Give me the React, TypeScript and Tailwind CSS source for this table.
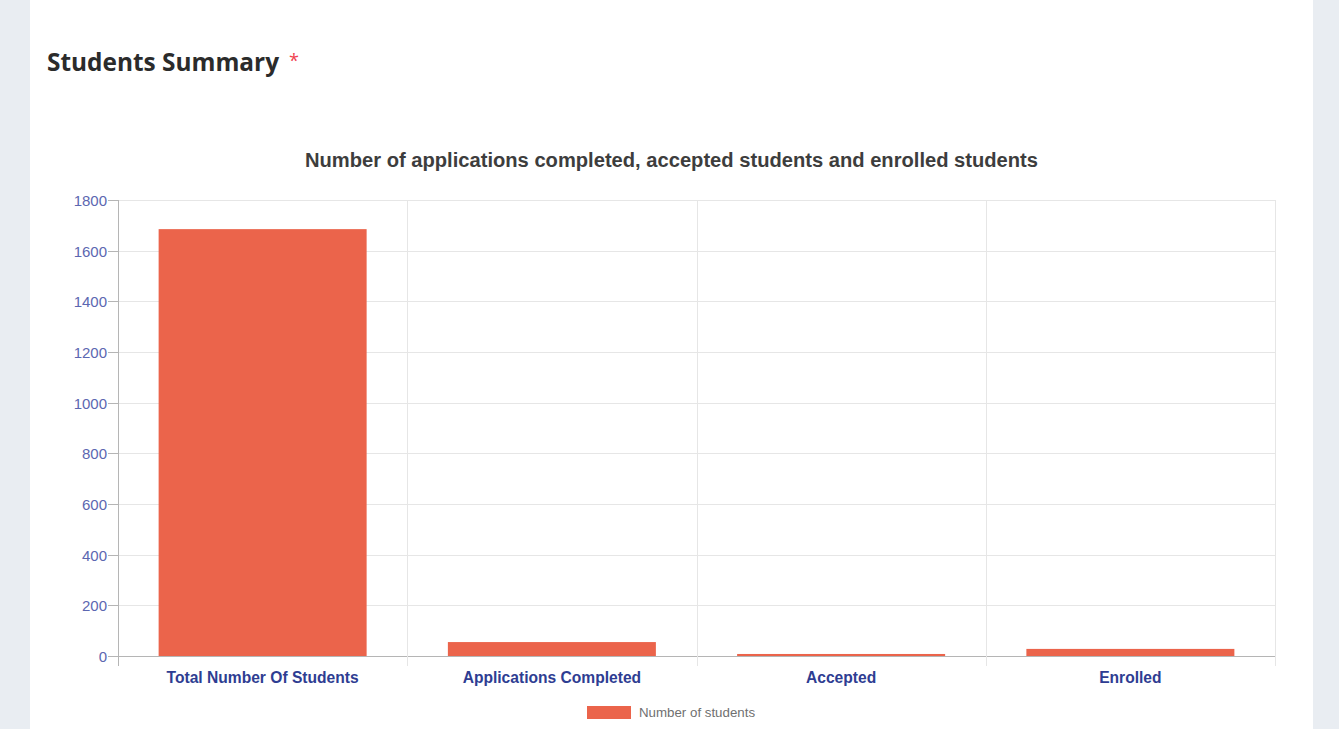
import React from "react";

const TOP = 130;
const LEFT = 30;
const x0 = 118;
const x1 = 1275;
const yTop = 200;
const yBottom = 656;
const maxV = 1800;
const cats = [
  { label: "Total Number Of Students", v: 1685 },
  { label: "Applications Completed", v: 55 },
  { label: "Accepted", v: 8 },
  { label: "Enrolled", v: 28 },
];

function Chart() {
  const cw = (x1 - x0) / cats.length;
  const ticks = [0, 200, 400, 600, 800, 1000, 1200, 1400, 1600, 1800];
  const yOf = (v: number) => yBottom - (v / maxV) * (yBottom - yTop);
  return (
    <svg width={1283} height={600} className="block" style={{ fontFamily: '"Liberation Sans", Arial, sans-serif' }}>
      <g transform={`translate(${-LEFT}, ${-TOP})`}>
        <text x={671.5} y={167} textAnchor="middle" fontSize={20.15} fontWeight={700} fill="#3d3d3d">
          Number of applications completed, accepted students and enrolled students
        </text>
        {ticks.map((t) => {
          const y = Math.round(yOf(t)) + 0.5;
          return (
            <g key={t}>
              <line x1={109} x2={x1} y1={y} y2={y} stroke={t === 0 ? "#b5b5b5" : "#e6e6e6"} strokeWidth={1} />
              <line x1={108} x2={118} y1={y} y2={y} stroke="#b5b5b5" strokeWidth={1} />
              <text x={107} y={y + 5} textAnchor="end" fontSize={15} fill="#5c67b1">
                {t}
              </text>
            </g>
          );
        })}
        {[0, 1, 2, 3, 4].map((i) => {
          const x = Math.round(x0 + i * cw) + 0.5;
          return (
            <line key={i} x1={x} x2={x} y1={yTop} y2={666} stroke={i === 0 ? "#b5b5b5" : "#e6e6e6"} strokeWidth={1} />
          );
        })}
        {cats.map((c, i) => {
          const cx = x0 + i * cw + cw / 2;
          const bw = 208;
          const y = yOf(c.v);
          return (
            <g key={c.label}>
              <rect x={cx - bw / 2} y={y} width={bw} height={yBottom - y} fill="#eb644b" />
              <text x={cx} y={682.5} textAnchor="middle" fontSize={15.6} fontWeight={700} fill="#2e3d92">
                {c.label}
              </text>
            </g>
          );
        })}
        <rect x={587} y={706} width={44} height={13} fill="#eb644b" />
        <text x={639} y={717} fontSize={13.3} fill="#707070">
          Number of students
        </text>
      </g>
    </svg>
  );
}

export default function App() {
  return (
    <div className="h-[729px] w-full overflow-hidden bg-[#e9edf2] pl-[30px] pr-[26px]">
      <div className="h-full bg-white">
        <div className="pl-[17px] pt-[46px] h-[130px]">
          <h2
            className="flex items-start text-[24.4px] leading-[32px] font-bold text-[#2b2b2b]"
            style={{ fontFamily: '"Open Sans", Lato, sans-serif' }}
          >
            <span>Students Summary</span>
            <span className="ml-[10px] text-[18px] leading-[28px] text-[#f0424f] font-normal">*</span>
          </h2>
        </div>
        <Chart />
      </div>
    </div>
  );
}
